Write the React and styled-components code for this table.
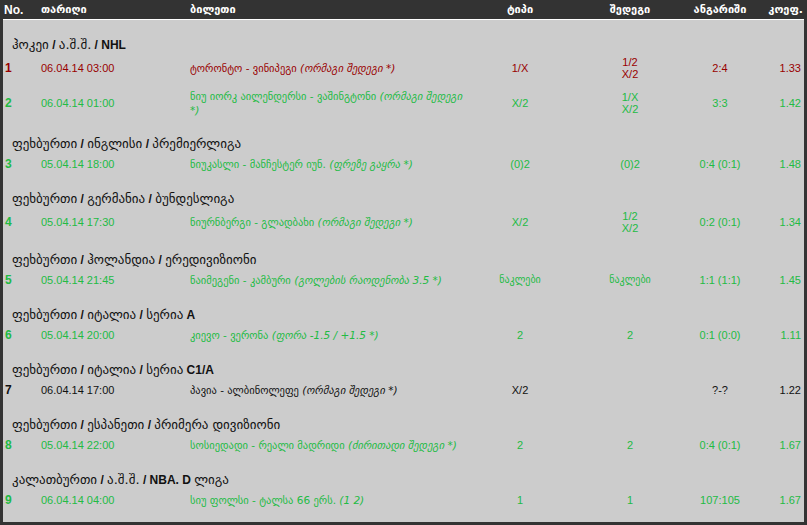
import React from "react";
import styled, { createGlobalStyle } from "styled-components";

const GlobalStyles = createGlobalStyle`
  html, body {
    margin: 0;
    padding: 0;
    background: #cccccc;
  }
  * {
    box-sizing: border-box;
  }
`;

const COLS = "38px 149px 280px 100px 120px 60px 54px";

const colors = {
  red: "#990000",
  green: "#22bb44",
  black: "#111111",
};

const Board = styled.div`
  width: 807px;
  height: 525px;
  background: #cccccc;
  border: 3px solid #333333;
  border-top: none;
  font-family: "Liberation Sans", "DejaVu Sans", sans-serif;
  overflow: hidden;
`;

const Header = styled.div`
  display: grid;
  grid-template-columns: ${COLS};
  height: 20px;
  background: #333333;
  border-bottom: 1px solid #ffffff;
  color: #ffffff;
  font-size: 12px;
  font-weight: bold;
  align-items: center;
`;

const HeaderCell = styled.div`
  padding-left: ${(p) => (p.$first ? "1px" : "0")};
  padding-right: ${(p) => (p.$align === "right" ? "1px" : "0")};
  text-align: ${(p) => p.$align || "left"};
  font-family: ${(p) =>
    p.$latin ? `"Liberation Sans", sans-serif` : `"DejaVu Sans", sans-serif`};
  font-size: ${(p) => (p.$latin ? "12px" : "11px")};
`;

const Body = styled.div`
  padding-top: 3px;
`;

const Section = styled.div`
  height: 29px;
  padding: 14px 0 0 9px;
  line-height: 15px;
  font-size: 12px;
  color: #111111;
  font-weight: bold;
  white-space: nowrap;
`;

const Geo = styled.span`
  font-family: "DejaVu Sans", sans-serif;
  font-weight: normal;
  font-size: 13px;
`;

const Row = styled.div`
  display: grid;
  grid-template-columns: ${COLS};
  min-height: 26px;
  padding: 4px 0;
  align-items: center;
  line-height: 12px;
  font-size: 11px;
  color: ${(p) => colors[p.$tone]};
`;

const Num = styled.div`
  padding-left: 2px;
  font-weight: bold;
  font-size: 12px;
`;

const Cell = styled.div`
  text-align: ${(p) => p.$align || "left"};
  padding-right: ${(p) => (p.$align === "right" ? "3px" : "0")};
`;

const Ticket = styled.div`
  font-family: "DejaVu Sans", sans-serif;
  font-size: 10.5px;
  line-height: 14px;
  padding: 1px 1px 1px 0;
`;

const Extra = styled.i`
  font-style: italic;
`;

const GeoCell = styled(Cell)`
  font-family: "DejaVu Sans", sans-serif;
  font-size: 10px;
`;

const sections = [
  {
    title: "ჰოკეი / ა.შ.შ. / NHL",
    rows: [
      {
        n: 1, tone: "red", date: "06.04.14 03:00",
        teams: "ტორონტო - ვინიპეგი", extra: "(ორმაგი შედეგი *)",
        type: "1/X", result: ["1/2", "X/2"], score: "2:4", coef: "1.33",
      },
      {
        n: 2, tone: "green", date: "06.04.14 01:00",
        teams: "ნიუ იორკ აილენდერსი - ვაშინგტონი", extra: "(ორმაგი შედეგი *)",
        type: "X/2", result: ["1/X", "X/2"], score: "3:3", coef: "1.42",
      },
    ],
  },
  {
    title: "ფეხბურთი / ინგლისი / პრემიერლიგა",
    rows: [
      {
        n: 3, tone: "green", date: "05.04.14 18:00",
        teams: "ნიუკასლი - მანჩესტერ იუნ.", extra: "(ფრეზე გაყრა *)",
        type: "(0)2", result: ["(0)2"], score: "0:4 (0:1)", coef: "1.48",
      },
    ],
  },
  {
    title: "ფეხბურთი / გერმანია / ბუნდესლიგა",
    rows: [
      {
        n: 4, tone: "green", date: "05.04.14 17:30",
        teams: "ნიურნბერგი - გლადბახი", extra: "(ორმაგი შედეგი *)",
        type: "X/2", result: ["1/2", "X/2"], score: "0:2 (0:1)", coef: "1.34",
      },
    ],
  },
  {
    title: "ფეხბურთი / ჰოლანდია / ერედივიზიონი",
    rows: [
      {
        n: 5, tone: "green", date: "05.04.14 21:45",
        teams: "ნაიმეგენი - კამბური", extra: "(გოლების რაოდენობა 3.5 *)",
        type: "ნაკლები", result: ["ნაკლები"], score: "1:1 (1:1)", coef: "1.45", geo: true,
      },
    ],
  },
  {
    title: "ფეხბურთი / იტალია / სერია A",
    rows: [
      {
        n: 6, tone: "green", date: "05.04.14 20:00",
        teams: "კიევო - ვერონა", extra: "(ფორა -1.5 / +1.5 *)",
        type: "2", result: ["2"], score: "0:1 (0:0)", coef: "1.11",
      },
    ],
  },
  {
    title: "ფეხბურთი / იტალია / სერია C1/A",
    rows: [
      {
        n: 7, tone: "black", date: "06.04.14 17:00",
        teams: "პავია - ალბინოლეფე", extra: "(ორმაგი შედეგი *)",
        type: "X/2", result: [], score: "?-?", coef: "1.22",
      },
    ],
  },
  {
    title: "ფეხბურთი / ესპანეთი / პრიმერა დივიზიონი",
    rows: [
      {
        n: 8, tone: "green", date: "05.04.14 22:00",
        teams: "სოსიედადი - რეალი მადრიდი", extra: "(ძირითადი შედეგი *)",
        type: "2", result: ["2"], score: "0:4 (0:1)", coef: "1.67",
      },
    ],
  },
  {
    title: "კალათბურთი / ა.შ.შ. / NBA. D ლიგა",
    rows: [
      {
        n: 9, tone: "green", date: "06.04.14 04:00",
        teams: "სიუ ფოლსი - ტალსა 66 ერს.", extra: "(1 2)",
        type: "1", result: ["1"], score: "107:105", coef: "1.67",
      },
    ],
  },
];

const GEO = /([\u10A0-\u10FF][\u10A0-\u10FF.]*(?: [\u10A0-\u10FF][\u10A0-\u10FF.]*)*)/;

function Title({ text }) {
  return (
    <Section>
      {text.split(GEO).map((part, i) =>
        i % 2 === 1 ? <Geo key={i}>{part}</Geo> : <span key={i}>{part}</span>
      )}
    </Section>
  );
}

function Bet({ row }) {
  const Val = row.geo ? GeoCell : Cell;
  return (
    <Row $tone={row.tone}>
      <Num>{row.n}</Num>
      <Cell>{row.date}</Cell>
      <Ticket>
        {row.teams} <Extra>{row.extra}</Extra>
      </Ticket>
      <Val $align="center">{row.type}</Val>
      <Val $align="center">
        {row.result.map((r) => (
          <div key={r}>{r}</div>
        ))}
      </Val>
      <Cell $align="center">{row.score}</Cell>
      <Cell $align="right">{row.coef}</Cell>
    </Row>
  );
}

export default function App() {
  return (
    <>
      <GlobalStyles />
      <Board>
        <Header>
          <HeaderCell $first $latin>No.</HeaderCell>
          <HeaderCell>თარიღი</HeaderCell>
          <HeaderCell>ბილეთი</HeaderCell>
          <HeaderCell $align="center">ტიპი</HeaderCell>
          <HeaderCell $align="center">შედეგი</HeaderCell>
          <HeaderCell $align="center">ანგარიში</HeaderCell>
          <HeaderCell $align="right">კოეფ.</HeaderCell>
        </Header>
        <Body>
          {sections.map((s) => (
            <React.Fragment key={s.title}>
              <Title text={s.title} />
              {s.rows.map((r) => (
                <Bet key={r.n} row={r} />
              ))}
            </React.Fragment>
          ))}
        </Body>
      </Board>
    </>
  );
}
